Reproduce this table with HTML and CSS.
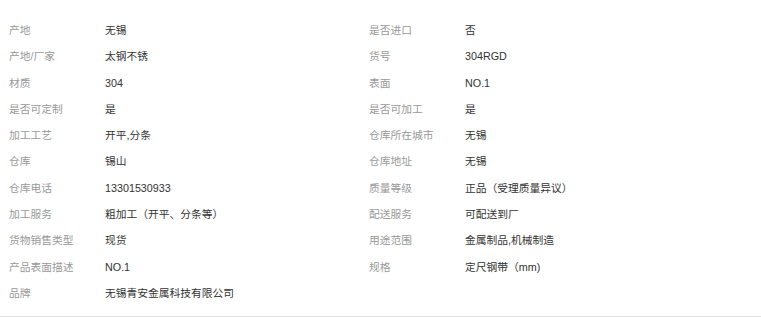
FILE: index.html
```html
<!DOCTYPE html>
<html lang="zh">
<head>
<meta charset="utf-8">
<link rel="stylesheet" href="styles.css">
</head>
<body>
<div class="attrs">
  <ul class="attr-list">
    <li class="attr"><span class="label">产地</span><span class="value">无锡</span></li>
    <li class="attr"><span class="label">是否进口</span><span class="value">否</span></li>
    <li class="attr"><span class="label">产地/厂家</span><span class="value">太钢不锈</span></li>
    <li class="attr"><span class="label">货号</span><span class="value">304RGD</span></li>
    <li class="attr"><span class="label">材质</span><span class="value">304</span></li>
    <li class="attr"><span class="label">表面</span><span class="value">NO.1</span></li>
    <li class="attr"><span class="label">是否可定制</span><span class="value">是</span></li>
    <li class="attr"><span class="label">是否可加工</span><span class="value">是</span></li>
    <li class="attr"><span class="label">加工工艺</span><span class="value">开平,分条</span></li>
    <li class="attr"><span class="label">仓库所在城市</span><span class="value">无锡</span></li>
    <li class="attr"><span class="label">仓库</span><span class="value">锡山</span></li>
    <li class="attr"><span class="label">仓库地址</span><span class="value">无锡</span></li>
    <li class="attr"><span class="label">仓库电话</span><span class="value">13301530933</span></li>
    <li class="attr"><span class="label">质量等级</span><span class="value">正品（受理质量异议）</span></li>
    <li class="attr"><span class="label">加工服务</span><span class="value">粗加工（开平、分条等）</span></li>
    <li class="attr"><span class="label">配送服务</span><span class="value">可配送到厂</span></li>
    <li class="attr"><span class="label">货物销售类型</span><span class="value">现货</span></li>
    <li class="attr"><span class="label">用途范围</span><span class="value">金属制品,机械制造</span></li>
    <li class="attr"><span class="label">产品表面描述</span><span class="value">NO.1</span></li>
    <li class="attr"><span class="label">规格</span><span class="value">定尺钢带（mm)</span></li>
    <li class="attr"><span class="label">品牌</span><span class="value">无锡青安金属科技有限公司</span></li>
  </ul>
</div>
</body>
</html>
```

FILE: styles.css
```css
html, body {
  margin: 0;
  padding: 0;
  background: #fff;
}
body {
  font-family: "Liberation Sans", Arial, "Noto Sans CJK SC", sans-serif;
  font-size: 10.75px;
}
.attrs {
  width: 761px;
  padding: 17px 0 10px;
  border-bottom: 1px solid #e3e3e3;
}
.attr-list {
  list-style: none;
  margin: 0;
  padding: 0;
  display: grid;
  grid-template-columns: 360px 360px;
}
.attr {
  display: flex;
  height: 26.3px;
  line-height: 26.3px;
  padding-left: 9px;
  white-space: nowrap;
}
.label {
  width: 96px;
  flex: none;
  color: #999;
}
.value {
  color: #333;
}
```
